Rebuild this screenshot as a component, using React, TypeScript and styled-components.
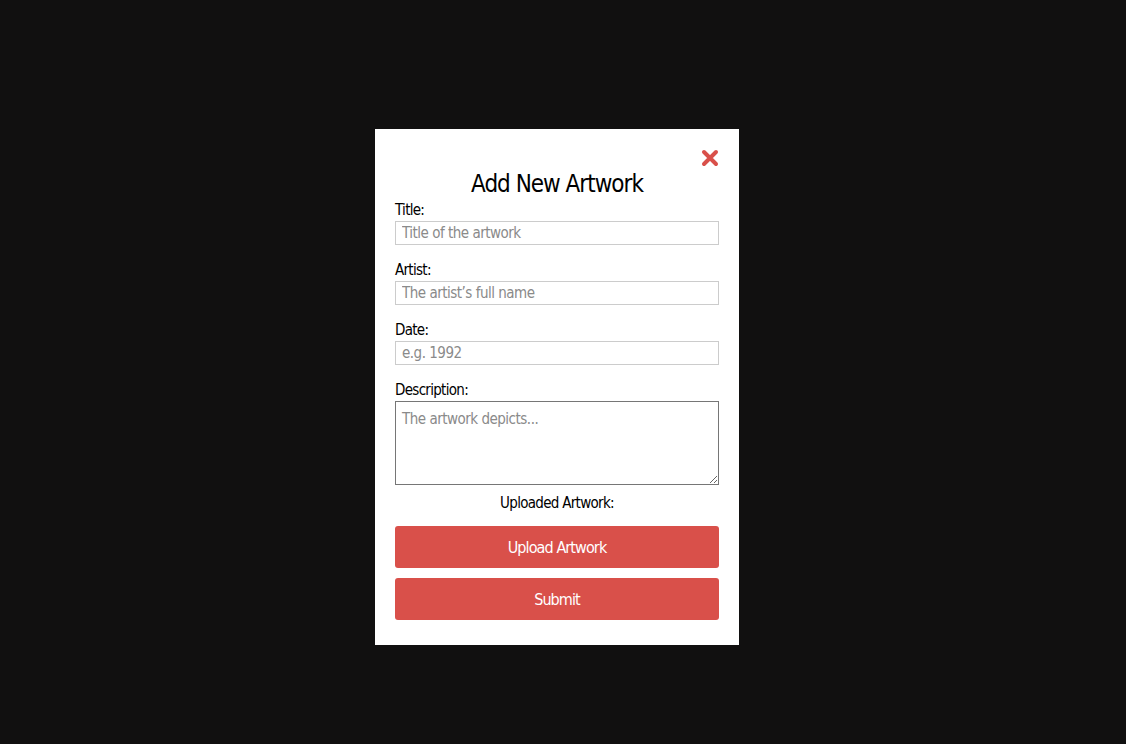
import React from "react";
import styled, { createGlobalStyle } from "styled-components";

const Global = createGlobalStyle`
  html, body { margin: 0; padding: 0; background: #111010; }
  body { font-family: "DejaVu Sans Condensed", "Liberation Sans", sans-serif; }
  * { box-sizing: border-box; }
`;

const Page = styled.div`
  width: 1126px;
  height: 744px;
  background: #111010;
  display: flex;
  justify-content: center;
  align-items: flex-start;
  padding: 129px 12px 0 0;
`;

const Modal = styled.div`
  width: 364px;
  height: 516px;
  background: #ffffff;
  padding: 18px 20px 25px 20px;
  display: flex;
  flex-direction: column;
  position: relative;
  & > * { flex-shrink: 0; }
`;

const Close = styled.button`
  position: absolute;
  top: 20px;
  right: 20px;
  width: 18px;
  height: 18px;
  padding: 0;
  border: none;
  background: none;
  cursor: pointer;
`;

const Heading = styled.h2`
  margin: 22px 0 0 0;
  text-align: center;
  font-size: 24px;
  font-weight: normal;
  line-height: 30px;
  color: #000;
  letter-spacing: -1px;
`;

const Field = styled.div<{ $last?: boolean }>`
  display: flex;
  flex-direction: column;
  margin-bottom: ${(p) => (p.$last ? "0" : "14px")};
`;

const Label = styled.label`
  font-size: 15px;
  line-height: 22px;
  color: #000;
  letter-spacing: -0.7px;
`;

const Input = styled.input`
  width: 324px;
  height: 24px;
  border: 1px solid #cccccc;
  padding: 0 6px;
  font-family: inherit;
  font-size: 15px;
  letter-spacing: -0.5px;
  color: #000;
  outline: none;
  &::placeholder { color: #8a8a8a; }
`;

const TextArea = styled.textarea`
  width: 324px;
  height: 84px;
  border: 1px solid #767676;
  padding: 8px 6px 6px 6px;
  font-family: inherit;
  font-size: 15px;
  letter-spacing: -0.5px;
  outline: none;
  resize: vertical;
  display: block;
  &::placeholder { color: #8a8a8a; }
`;

const Uploaded = styled.div`
  text-align: center;
  font-size: 15px;
  line-height: 22px;
  letter-spacing: -0.7px;
  color: #000;
  margin-top: 7px;
  margin-bottom: 12px;
`;

const Button = styled.button`
  width: 324px;
  height: 42px;
  border: none;
  border-radius: 3px;
  background: #d9504a;
  color: #fff;
  font-family: inherit;
  font-size: 16px;
  letter-spacing: -0.9px;
  cursor: pointer;
  & + & { margin-top: 10px; }
`;

const FieldsWrap = styled.div`
  display: flex;
  flex-direction: column;
`;

export default function App() {
  return (
    <>
      <Global />
      <Page>
        <Modal>
          <Close aria-label="close">
            <svg width="18" height="18" viewBox="0 0 18 18">
              <path d="M3 3 L15 15 M15 3 L3 15" stroke="#d9504a" strokeWidth="4" strokeLinecap="round" />
            </svg>
          </Close>
          <Heading>Add New Artwork</Heading>
          <FieldsWrap>
            <Field>
              <Label>Title:</Label>
              <Input placeholder="Title of the artwork" />
            </Field>
            <Field>
              <Label>Artist:</Label>
              <Input placeholder="The artist’s full name" />
            </Field>
            <Field>
              <Label>Date:</Label>
              <Input placeholder="e.g. 1992" />
            </Field>
            <Field $last>
              <Label>Description:</Label>
              <TextArea placeholder="The artwork depicts..." />
            </Field>
          </FieldsWrap>
          <Uploaded>Uploaded Artwork:</Uploaded>
          <Button>Upload Artwork</Button>
          <Button>Submit</Button>
        </Modal>
      </Page>
    </>
  );
}
